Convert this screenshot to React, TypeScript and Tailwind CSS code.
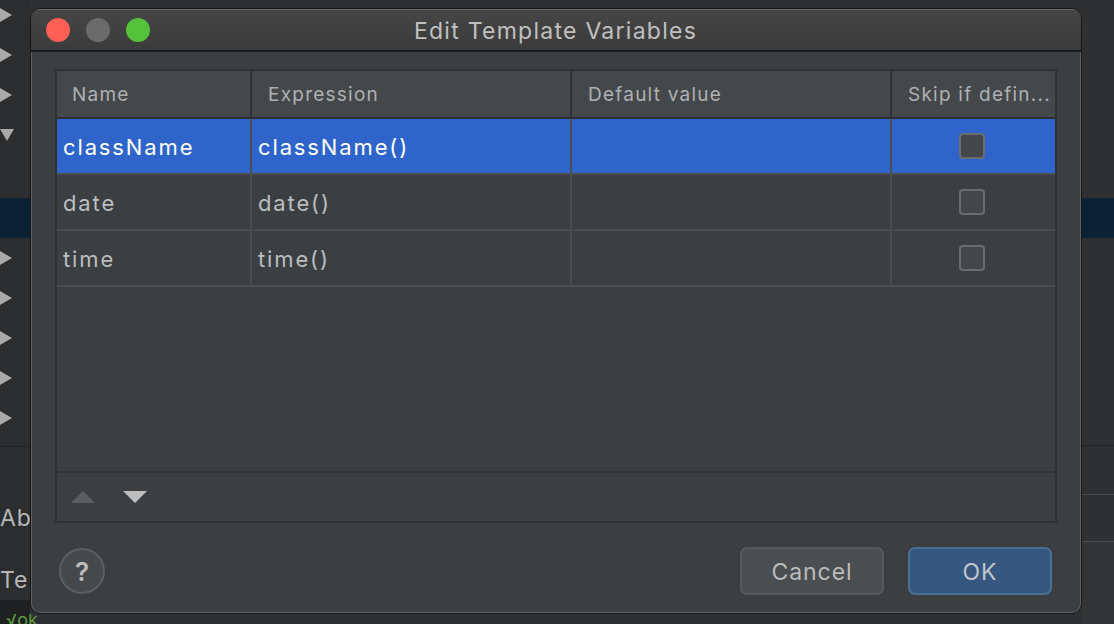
import React from "react";

const FONT = { fontFamily: 'Inter, "Noto Sans", sans-serif' };

const rows = [
  { name: "className", expr: "className()", selected: true },
  { name: "date", expr: "date()", selected: false },
  { name: "time", expr: "time()", selected: false },
];

function Tri({ dir, color }: { dir: "right" | "down" | "up"; color: string }) {
  if (dir === "right")
    return (
      <svg width="12" height="14" viewBox="0 0 12 14">
        <path d="M0 0 L12 7 L0 14 Z" fill={color} />
      </svg>
    );
  if (dir === "down")
    return (
      <svg width="24" height="12" viewBox="0 0 24 12">
        <path d="M0 0 L24 0 L12 12 Z" fill={color} />
      </svg>
    );
  return (
    <svg width="24" height="12" viewBox="0 0 24 12">
      <path d="M0 12 L24 12 L12 0 Z" fill={color} />
    </svg>
  );
}

function LeftStrip() {
  const arrow = (
    <div className="h-10 flex items-center">
      <Tri dir="right" color="#a9a9a9" />
    </div>
  );
  return (
    <div className="w-[30px] h-full bg-[#2b2d2f] flex flex-col">
      <div className="mt-[-5px]">{arrow}</div>
      {arrow}
      {arrow}
      <div className="h-10 flex items-center">
        <svg width="14" height="12" viewBox="0 0 14 12">
          <path d="M0 0 L14 0 L7 12 Z" fill="#a9a9a9" />
        </svg>
      </div>
      <div className="h-[43px]" />
      <div className="h-10 bg-[#0c2134]" />
      {arrow}
      {arrow}
      {arrow}
      {arrow}
      {arrow}
      <div className="h-[8px]" />
      <div className="h-px bg-[#232426]" />
      <div className="h-[51px]" />
      <div className="h-10 flex items-center text-[23px] tracking-[0.04em] text-[#b8b8b8]">Ab</div>
      <div className="h-[22px]" />
      <div className="h-10 flex items-center text-[23px] tracking-[0.04em] text-[#b8b8b8]">Te</div>
      <div className="flex-1 bg-[#1f2022]" />
    </div>
  );
}

function RightStrip() {
  return (
    <div className="w-[32px] h-full bg-[#2e3032] flex flex-col">
      <div className="h-[198px]" />
      <div className="h-10 bg-[#0c2134]" />
      <div className="h-[207px]" />
      <div className="h-px bg-[#232426]" />
      <div className="h-[48px]" />
      <div className="h-px bg-[#4a4c4e]" />
      <div className="h-[46px]" />
      <div className="h-px bg-[#4a4c4e]" />
      <div className="flex-1 bg-[#323436]" />
    </div>
  );
}

function Checkbox() {
  return (
    <div className="w-[26px] h-[26px] rounded-[4px] border-2 border-[#6a6d6f] bg-[#43474a]" />
  );
}

function Table() {
  const cols = "grid grid-cols-[195px_320px_320px_1fr]";
  return (
    <div className="mx-[24px] mt-[17px] h-[454px] border-2 border-[#2f3133] flex flex-col">
      <div className={`${cols} h-[48px] bg-[#45484a] border-b-2 border-[#2d2f31] text-[19px] tracking-[0.065em] text-[#aeb0b2]`}>
        <div className="flex items-center pt-[3px] pl-[15px] border-r-2 border-[#2f3133]">Name</div>
        <div className="flex items-center pt-[3px] pl-[16px] border-r-2 border-[#2f3133]">Expression</div>
        <div className="flex items-center pt-[3px] pl-[16px] border-r-2 border-[#2f3133]">Default value</div>
        <div className="flex items-center pt-[3px] pl-[16px] whitespace-nowrap overflow-hidden">Skip if defin...</div>
      </div>
      {rows.map((r) => (
        <div
          key={r.name}
          className={`${cols} h-[56px] border-b-2 border-[#4b4e50] text-[22px] tracking-[0.085em] ${
            r.selected ? "bg-[#2f65ca] text-white" : "bg-[#3c3f41] text-[#bbbdbf]"
          }`}
        >
          <div className="flex items-center pt-[2px] pl-[6px] border-r-2 border-[#4b4e50]">{r.name}</div>
          <div className="flex items-center pt-[2px] pl-[6px] border-r-2 border-[#4b4e50]">{r.expr}</div>
          <div className="border-r-2 border-[#4b4e50]" />
          <div className="flex items-center justify-center pr-[4px]">
            <Checkbox />
          </div>
        </div>
      ))}
      <div className="flex-1" />
      <div className="h-[50px] border-t-2 border-[#2f3133] flex items-center gap-[28px] pl-[14px]">
        <Tri dir="up" color="#5b5e60" />
        <Tri dir="down" color="#bdbdbd" />
      </div>
    </div>
  );
}

function Dialog() {
  return (
    <div className="absolute left-[30px] top-[8px] w-[1052px] h-[606px] rounded-[10px] border border-[#151515] bg-[#3c3f41] overflow-hidden flex flex-col shadow-[inset_0_0_0_1px_#5f6163]">
      <div className="h-[43px] bg-gradient-to-b from-[#464646] to-[#3b3b3b] border-b-2 border-[#1c1c1c] flex items-center shadow-[inset_0_1px_0_#6a6a6a]">
        <div className="flex gap-[16px] pl-[15px]">
          <div className="w-[24px] h-[24px] rounded-full bg-[#fe5f57]" />
          <div className="w-[24px] h-[24px] rounded-full bg-[#6b6b6b]" />
          <div className="w-[24px] h-[24px] rounded-full bg-[#56c13a]" />
        </div>
        <div className="flex-1 text-center pt-[3px] text-[23px] tracking-[0.055em] text-[#c0c0c0] pr-[120px]">
          Edit Template Variables
        </div>
      </div>
      <Table />
      <div className="flex items-center px-[28px] pt-[24px]">
        <div className="w-[46px] h-[46px] rounded-full border-2 border-[#5c5f61] bg-[#46494b] flex items-center justify-center text-[26px] font-semibold text-[#bcbcbc]">
          ?
        </div>
        <div className="flex-1" />
        <button className="w-[144px] h-[48px] pt-[2px] rounded-[7px] border-2 border-[#56595b] bg-[#4b4e50] text-[23px] tracking-[0.04em] text-[#bcbcbc]">
          Cancel
        </button>
        <button className="ml-[24px] mr-[1px] w-[144px] h-[48px] pt-[2px] rounded-[7px] border-2 border-[#4a6f92] bg-[#365880] text-[23px] tracking-[0.04em] text-[#c2c6cc]">
          OK
        </button>
      </div>
    </div>
  );
}

export default function App() {
  return (
    <div className="relative w-[1114px] h-[624px] overflow-hidden bg-[#2b2d2f] flex" style={FONT}>
      <LeftStrip />
      <div className="flex-1 bg-[#2e3032]" />
      <RightStrip />
      <div className="absolute left-0 bottom-0 w-[200px] h-[10px] text-[#5c9a3e] text-[18px] leading-[10px] pl-[6px] pt-[1px] overflow-hidden">
        √ok
      </div>
      <Dialog />
    </div>
  );
}
